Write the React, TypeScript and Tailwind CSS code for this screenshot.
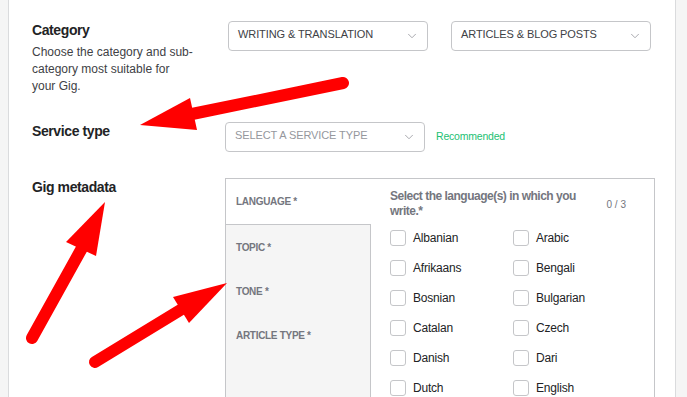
import React from "react";
import { ChevronDown } from "lucide-react";

const LANGUAGES: [string, string][] = [
  ["Albanian", "Arabic"],
  ["Afrikaans", "Bengali"],
  ["Bosnian", "Bulgarian"],
  ["Catalan", "Czech"],
  ["Danish", "Dari"],
  ["Dutch", "English"],
];

/* ── Select box ───────────────────────────────────────────── */
function Select({ label, placeholder }: { label: string; placeholder?: boolean }) {
  return (
    <div className="w-[200px] h-[30px] border border-[#c5c6c9] rounded-[4px] bg-white flex items-center justify-between pl-[9px] pr-[8px] pb-[3px]">
      <span
        className={`text-[11px] uppercase tracking-[-0.1px] ${placeholder ? "text-[#95979d]" : "text-[#404145]"}`}
      >
        {label}
      </span>
      <ChevronDown size={14} strokeWidth={1.4} className="text-[#95979d] mt-[3px]" />
    </div>
  );
}

function Checkbox({ label }: { label: string }) {
  return (
    <label className="flex items-center h-[30px] gap-[7px]">
      <span className="w-[16px] h-[16px] border border-[#c5c6c9] rounded-[3px] bg-white shrink-0" />
      <span className="text-[12px] text-[#222325] tracking-[-0.2px]">{label}</span>
    </label>
  );
}

/* ── Annotation arrows ────────────────────────────────────── */
function Arrows() {
  return (
    <svg className="absolute inset-0 pointer-events-none" width={687} height={397} viewBox="0 0 687 397">
      <g fill="#ff0000" stroke="#ff0000" strokeLinecap="round">
        <line x1={343} y1={83} x2={192} y2={114} strokeWidth={12} />
        <polygon points="140,125 190,98 197,130" stroke="none" />
        <line x1={32} y1={338} x2={82} y2={248} strokeWidth={12} />
        <polygon points="105,202 66,242 96,256" stroke="none" />
        <line x1={95} y1={362} x2={182} y2={309} strokeWidth={12} />
        <polygon points="227,283 173,297 189,323" stroke="none" />
      </g>
    </svg>
  );
}

export default function App() {
  return (
    <div
      className="relative flex h-[397px] w-[687px] overflow-hidden bg-[#f5f5f5]"
      style={{ fontFamily: '"Liberation Sans", Arial, sans-serif' }}
    >
      <div className="w-[8px] shrink-0" />
      <div className="w-[668px] shrink-0 bg-white border-x border-[#dadbdd] pl-[23px] pt-[21px]">
        {/* CATEGORY */}
        <div className="flex">
          <div className="w-[193px] shrink-0">
            <h2 className="text-[14px] leading-[18px] font-bold text-[#222325] tracking-[-0.4px]">Category</h2>
            <p className="mt-[5px] w-[162px] text-[12px] leading-[17px] text-[#404145]">
              Choose the category and sub-category most suitable for your Gig.
            </p>
          </div>
          <div className="flex gap-[23px] pl-[3px]">
            <Select label="Writing & Translation" />
            <Select label="Articles & Blog Posts" />
          </div>
        </div>

        {/* SERVICE TYPE */}
        <div className="flex mt-[27px]">
          <div className="w-[193px] shrink-0">
            <h2 className="text-[14px] leading-[18px] font-bold text-[#222325] tracking-[-0.4px]">Service type</h2>
          </div>
          <div className="flex items-center gap-[12px]">
            <div className="w-[199px]">
              <Select label="Select a service type" placeholder />
            </div>
            <span className="text-[10.5px] text-[#1dbf73] tracking-[-0.2px]">Recommended</span>
          </div>
        </div>

        {/* GIG METADATA */}
        <div className="flex mt-[26px]">
          <div className="w-[193px] shrink-0">
            <h2 className="text-[14px] leading-[18px] font-bold text-[#222325] tracking-[-0.4px]">Gig metadata</h2>
          </div>
          <div className="w-[430px] h-[260px] border border-[#c5c6c9] flex">
            <div className="w-[145px] shrink-0 flex flex-col">
              <div className="h-[45px] flex items-center pl-[10px] text-[10px] font-bold text-[#74767e] tracking-[-0.3px]">
                LANGUAGE *
              </div>
              <div className="flex-1 bg-[#f5f5f5] border-t border-r border-[#c5c6c9] flex flex-col">
                {["TOPIC *", "TONE *", "ARTICLE TYPE *"].map((t) => (
                  <div key={t} className="h-[44px] flex items-center pl-[10px] text-[10px] font-bold text-[#74767e] tracking-[-0.3px]">
                    {t}
                  </div>
                ))}
              </div>
            </div>
            <div className="flex-1 pl-[19px] pt-[10px]">
              <div className="flex items-center pr-[28px]">
                <p className="w-[200px] text-[12px] leading-[15px] font-bold text-[#74767e] tracking-[-0.5px]">
                  Select the language(s) in which you write.*
                </p>
                <span className="ml-auto text-[10px] text-[#74767e]">0 / 3</span>
              </div>
              <div className="mt-[4px] grid grid-cols-[123px_123px]">
                {LANGUAGES.map(([a, b]) => (
                  <React.Fragment key={a}>
                    <Checkbox label={a} />
                    <Checkbox label={b} />
                  </React.Fragment>
                ))}
              </div>
            </div>
          </div>
        </div>
      </div>
      <Arrows />
    </div>
  );
}
